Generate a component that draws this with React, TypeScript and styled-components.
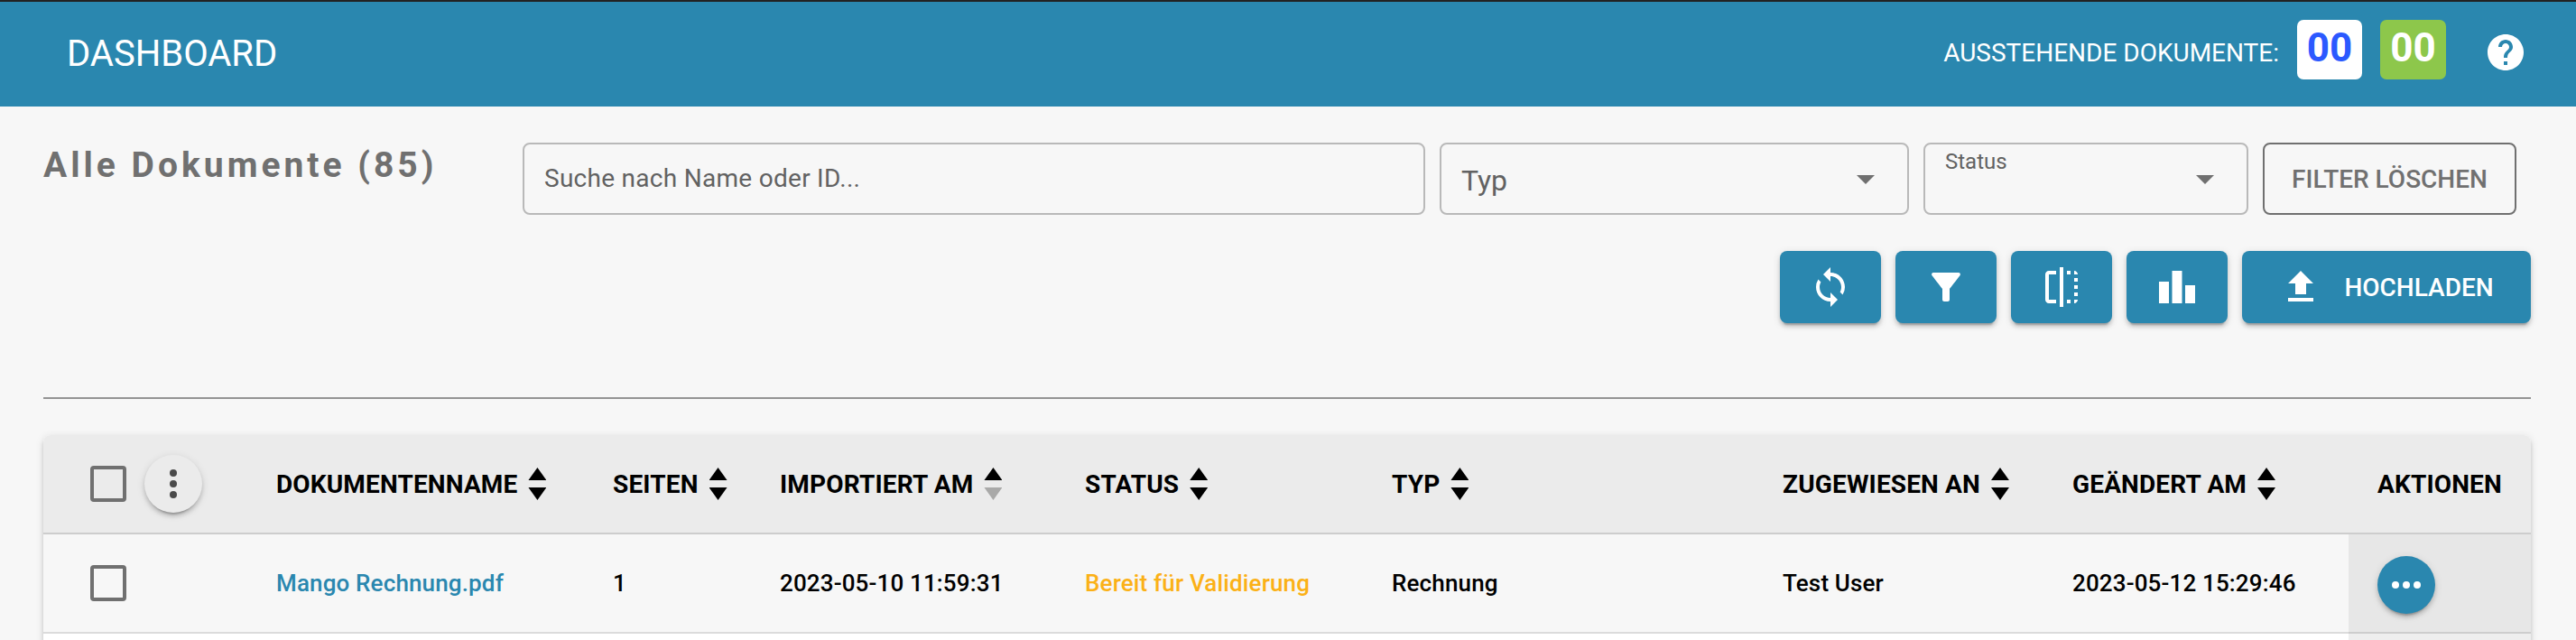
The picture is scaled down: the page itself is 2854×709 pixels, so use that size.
import React from "react";
import styled, { createGlobalStyle } from "styled-components";
import { MdHelp, MdSync, MdFilterAlt, MdFlip, MdLeaderboard, MdFileUpload } from "react-icons/md";

const blue = "#2a87af";

const GlobalStyle = createGlobalStyle`
  * { box-sizing: border-box; }
  body {
    margin: 0;
    background: #f7f7f7;
    font-family: Roboto, "Liberation Sans", sans-serif;
    color: #000;
  }
  button { font-family: inherit; border: 0; margin: 0; padding: 0; }
`;

const Page = styled.div`
  height: 709px;
  overflow: hidden;
  display: flex;
  flex-direction: column;
`;

const Header = styled.header`
  height: 118px;
  flex: none;
  border-top: 2px solid #222;
  background: ${blue};
  color: #fff;
  display: flex;
  align-items: center;
  justify-content: space-between;
  padding: 0 54px 0 74px;
`;

const Title = styled.h1`
  margin: 0;
  font-size: 40px;
  line-height: 48px;
  font-weight: 400;
`;

const Pending = styled.div`
  display: flex;
  align-items: center;
  padding-bottom: 4px;
`;

const PendingLabel = styled.span`
  font-size: 28px;
  line-height: 36px;
  padding-top: 2px;
  margin-right: 20px;
`;

const Badge = styled.span<{ $bg: string; $fg: string; $w: number }>`
  width: ${(p) => p.$w}px;
  height: 66px;
  margin-top: -6px;
  margin-right: 20px;
  padding-bottom: 5px;
  border-radius: 7px;
  background: ${(p) => p.$bg};
  color: ${(p) => p.$fg};
  font-size: 44px;
  font-weight: 700;
  display: flex;
  align-items: center;
  justify-content: center;
`;

const HelpButton = styled.button`
  display: flex;
  margin-left: 22px;
  color: #fff;
  background: none;
  font-size: 48px;
`;

const Toolbar = styled.section`
  padding: 40px 50px 0 48px;
  height: 322px;
  flex: none;
`;

const Filters = styled.div`
  display: flex;
  align-items: flex-start;
  padding-right: 16px;
`;

const Heading = styled.h2`
  margin: 0;
  padding-top: 1px;
  flex: 1;
  font-size: 39px;
  line-height: 48px;
  font-weight: 700;
  letter-spacing: 4px;
  color: #707070;
`;

const Field = styled.div<{ $w: number }>`
  width: ${(p) => p.$w}px;
  height: 80px;
  margin-right: 16px;
  border: 2px solid #b9b9b9;
  border-radius: 8px;
  display: flex;
  align-items: center;
  justify-content: space-between;
  padding: 0 36px 0 22px;
  color: #626262;
`;

const Placeholder = styled.span`
  font-size: 28px;
  line-height: 40px;
  letter-spacing: 0.28px;
`;

const SelectLabel = styled.span`
  font-size: 32px;
  line-height: 40px;
  padding-top: 3px;
`;

const FloatingLabel = styled.span`
  align-self: flex-start;
  font-size: 24px;
  line-height: 38px;
`;

const Caret = styled.span`
  border: 10px solid transparent;
  border-top-color: #707070;
  border-bottom: 0;
  margin-top: 2px;
`;

const ClearButton = styled.button`
  width: 281px;
  height: 80px;
  border: 2px solid #707070;
  border-radius: 8px;
  background: none;
  color: #707070;
  font-size: 28px;
  font-weight: 500;
`;

const Actions = styled.div`
  display: flex;
  justify-content: flex-end;
  gap: 16px;
  margin-top: 40px;
`;

const ActionButton = styled.button<{ $wide?: boolean }>`
  width: ${(p) => (p.$wide ? 320 : 112)}px;
  height: 80px;
  border-radius: 8px;
  background: ${blue};
  color: #fff;
  display: flex;
  align-items: center;
  justify-content: center;
  gap: 24px;
  font-size: 28px;
  font-weight: 500;
  box-shadow: 0 6px 2px -4px rgba(0, 0, 0, 0.2), 0 4px 4px rgba(0, 0, 0, 0.14), 0 2px 10px rgba(0, 0, 0, 0.12);
  svg { width: 48px; height: 48px; }
`;

const Divider = styled.hr`
  flex: none;
  height: 2px;
  border: 0;
  margin: 0 50px 40px 48px;
  background: #949494;
`;

const Table = styled.div`
  flex: none;
  margin: 0 50px 0 48px;
  border-radius: 8px 8px 0 0;
  background: #fff;
  box-shadow: 0 6px 2px -4px rgba(0, 0, 0, 0.2), 0 4px 4px rgba(0, 0, 0, 0.14), 0 2px 10px rgba(0, 0, 0, 0.12);
`;

const Row = styled.div<{ $head?: boolean }>`
  display: grid;
  grid-template-columns: 226px 373px 185px 338px 340px 433px 321px 338px 202px;
  height: 110px;
  background: ${(p) => (p.$head ? "#ebebeb" : "#f7f7f7")};
  border-radius: ${(p) => (p.$head ? "8px 8px 0 0" : "0")};
  font-size: ${(p) => (p.$head ? 28 : 26)}px;
  font-weight: ${(p) => (p.$head ? 700 : 500)};
  letter-spacing: 0.15px;
`;

const Cell = styled.div<{ $head?: boolean; $shade?: string; $color?: string }>`
  display: flex;
  align-items: center;
  padding-left: 32px;
  white-space: nowrap;
  border-bottom: 2px solid ${(p) => (p.$head ? "#cdcdcd" : "rgba(0, 0, 0, 0.11)")};
  background: ${(p) => p.$shade ?? "none"};
  color: ${(p) => p.$color ?? "inherit"};
`;

const SelectCell = styled(Cell)`
  padding-left: 52px;
  gap: 20px;
`;

const Checkbox = styled.span`
  width: 40px;
  height: 40px;
  border: 4px solid #707070;
  border-radius: 4px;
`;

const RoundButton = styled.button<{ $primary?: boolean }>`
  width: 64px;
  height: 64px;
  margin-top: ${(p) => (p.$primary ? 4 : 0)}px;
  border-radius: 50%;
  background: ${(p) => (p.$primary ? blue : "#ebebeb")};
  display: flex;
  flex-direction: ${(p) => (p.$primary ? "row" : "column")};
  align-items: center;
  justify-content: center;
  gap: 4px;
  box-shadow: 0 6px 2px -4px rgba(0, 0, 0, 0.2), 0 4px 4px rgba(0, 0, 0, 0.14), 0 2px 10px rgba(0, 0, 0, 0.12);
`;

const Dot = styled.i<{ $color: string }>`
  width: 8px;
  height: 8px;
  border-radius: 50%;
  background: ${(p) => p.$color};
`;

const SortArrows = styled.span`
  display: flex;
  flex-direction: column;
  gap: 8px;
  margin-left: 12px;
`;

const SortArrow = styled.i<{ $down?: boolean; $dim?: boolean }>`
  width: 20px;
  height: 14px;
  background: ${(p) => (p.$dim ? "#a9a9a8" : "#000")};
  clip-path: ${(p) => (p.$down ? "polygon(0 0, 100% 0, 50% 100%)" : "polygon(50% 0, 100% 100%, 0 100%)")};
`;

const Remainder = styled.div`
  height: 30px;
  display: grid;
  grid-template-columns: 1fr 202px;
`;

const RemainderAction = styled.div`
  grid-column: 2;
  background: #eee;
`;

const columns = [
  { label: "DOKUMENTENNAME", value: "Mango Rechnung.pdf", color: blue },
  { label: "SEITEN", value: "1" },
  { label: "IMPORTIERT AM", value: "2023-05-10 11:59:31", sortedDesc: true },
  { label: "STATUS", value: "Bereit für Validierung", color: "#fbb117" },
  { label: "TYP", value: "Rechnung" },
  { label: "ZUGEWIESEN AN", value: "Test User" },
  { label: "GEÄNDERT AM", value: "2023-05-12 15:29:46" },
];

const Dots = ({ color }: { color: string }) => (
  <>
    <Dot $color={color} />
    <Dot $color={color} />
    <Dot $color={color} />
  </>
);

export default function App() {
  return (
    <Page>
      <GlobalStyle />
      <Header>
        <Title>DASHBOARD</Title>
        <Pending>
          <PendingLabel>AUSSTEHENDE DOKUMENTE:</PendingLabel>
          <Badge $bg="#fff" $fg="#2b59ff" $w={72}>00</Badge>
          <Badge $bg="#8dc74b" $fg="#fff" $w={73}>00</Badge>
          <HelpButton aria-label="Hilfe"><MdHelp /></HelpButton>
        </Pending>
      </Header>
      <Toolbar>
        <Filters>
          <Heading>Alle Dokumente (85)</Heading>
          <Field $w={1000}><Placeholder>Suche nach Name oder ID...</Placeholder></Field>
          <Field $w={520}><SelectLabel>Typ</SelectLabel><Caret /></Field>
          <Field $w={360}><FloatingLabel>Status</FloatingLabel><Caret /></Field>
          <ClearButton>FILTER LÖSCHEN</ClearButton>
        </Filters>
        <Actions>
          <ActionButton aria-label="Aktualisieren"><MdSync /></ActionButton>
          <ActionButton aria-label="Filter"><MdFilterAlt /></ActionButton>
          <ActionButton aria-label="Vergleichen"><MdFlip /></ActionButton>
          <ActionButton aria-label="Statistik"><MdLeaderboard /></ActionButton>
          <ActionButton $wide><MdFileUpload />HOCHLADEN</ActionButton>
        </Actions>
      </Toolbar>
      <Divider />
      <Table>
        <Row $head>
          <SelectCell $head>
            <Checkbox />
            <RoundButton aria-label="Mehr"><Dots color="#4a4a4a" /></RoundButton>
          </SelectCell>
          {columns.map((c) => (
            <Cell $head key={c.label}>
              {c.label}
              <SortArrows>
                <SortArrow />
                <SortArrow $down $dim={c.sortedDesc} />
              </SortArrows>
            </Cell>
          ))}
          <Cell $head>AKTIONEN</Cell>
        </Row>
        <Row>
          <SelectCell><Checkbox /></SelectCell>
          {columns.map((c) => (
            <Cell $color={c.color} key={c.label}>{c.value}</Cell>
          ))}
          <Cell $shade="#e7e7e7">
            <RoundButton $primary aria-label="Aktionen"><Dots color="#fff" /></RoundButton>
          </Cell>
        </Row>
        <Remainder><RemainderAction /></Remainder>
      </Table>
    </Page>
  );
}
